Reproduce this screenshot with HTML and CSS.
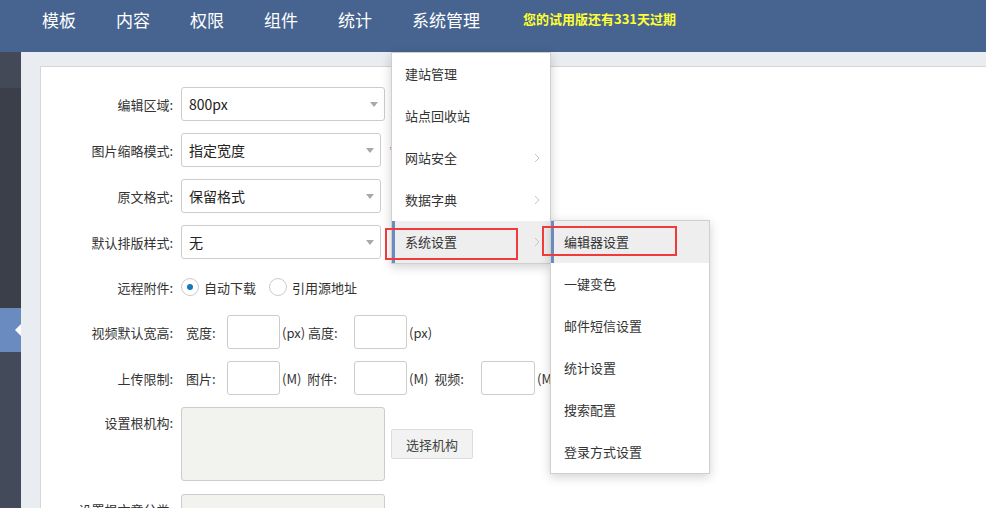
FILE: index.html
```html
<!DOCTYPE html>
<html lang="zh-CN">
<head>
    <meta charset="UTF-8">
    <meta name="viewport" content="width=device-width, initial-scale=1.0">
    <title>编辑器设置</title>
    <link rel="stylesheet" href="styles.css">
</head>
<body>
    <header class="top-bar">
        <nav class="top-nav">
            <a class="nav-item">模板</a>
            <a class="nav-item">内容</a>
            <a class="nav-item">权限</a>
            <a class="nav-item">组件</a>
            <a class="nav-item">统计</a>
            <a class="nav-item">系统管理</a>
        </nav>
        <span class="trial-tip">您的试用版还有331天过期</span>
    </header>

    <div class="main">
        <aside class="side-bar">
            <div class="side-top"></div>
            <div class="side-mid"></div>
            <div class="side-active"><span class="side-arrow"></span></div>
            <div class="side-rest"></div>
        </aside>

        <div class="content">
            <div class="panel">
                <div class="form-row">
                    <label class="form-label">编辑区域:</label>
                    <div class="select wide"><span>800px</span><i class="caret"></i></div>
                </div>
                <div class="form-row">
                    <label class="form-label">图片缩略模式:</label>
                    <div class="select"><span>指定宽度</span><i class="caret"></i></div>
                    <span class="req">*</span>
                </div>
                <div class="form-row">
                    <label class="form-label">原文格式:</label>
                    <div class="select"><span>保留格式</span><i class="caret"></i></div>
                </div>
                <div class="form-row">
                    <label class="form-label">默认排版样式:</label>
                    <div class="select"><span>无</span><i class="caret"></i></div>
                </div>
                <div class="form-row radio-row">
                    <label class="form-label">远程附件:</label>
                    <span class="radio checked"></span><span class="radio-text">自动下载</span>
                    <span class="radio"></span><span class="radio-text">引用源地址</span>
                </div>
                <div class="form-row">
                    <label class="form-label">视频默认宽高:</label>
                    <span class="field-text">宽度:</span>
                    <span class="box"></span>
                    <span class="unit">(px) 高度:</span>
                    <span class="box"></span>
                    <span class="unit">(px)</span>
                </div>
                <div class="form-row">
                    <label class="form-label">上传限制:</label>
                    <span class="field-text">图片:</span>
                    <span class="box"></span>
                    <span class="unit">(M)&nbsp; 附件:</span>
                    <span class="box"></span>
                    <span class="unit">(M)&nbsp; 视频:</span>
                    <span class="box box-last"></span>
                    <span class="unit">(M)</span>
                </div>
                <div class="form-row area-row">
                    <label class="form-label">设置根机构:</label>
                    <div class="area"></div>
                    <button class="pick-btn">选择机构</button>
                </div>
                <div class="form-row area-row">
                    <label class="form-label">设置根文章分类:</label>
                    <div class="area"></div>
                </div>
            </div>
        </div>
    </div>

    <ul class="drop-menu">
        <li class="menu-item">建站管理</li>
        <li class="menu-item">站点回收站</li>
        <li class="menu-item has-sub">网站安全<svg class="chev" width="6" height="10" viewBox="0 0 6 10"><polyline points="1,1 5,5 1,9" fill="none" stroke="#c4c4c4" stroke-width="1"/></svg></li>
        <li class="menu-item has-sub">数据字典<svg class="chev" width="6" height="10" viewBox="0 0 6 10"><polyline points="1,1 5,5 1,9" fill="none" stroke="#c4c4c4" stroke-width="1"/></svg></li>
        <li class="menu-item has-sub hover">系统设置<svg class="chev" width="6" height="10" viewBox="0 0 6 10"><polyline points="1,1 5,5 1,9" fill="none" stroke="#c4c4c4" stroke-width="1"/></svg></li>
    </ul>

    <ul class="drop-menu sub-menu">
        <li class="menu-item hover">编辑器设置</li>
        <li class="menu-item">一键变色</li>
        <li class="menu-item">邮件短信设置</li>
        <li class="menu-item">统计设置</li>
        <li class="menu-item">搜索配置</li>
        <li class="menu-item">登录方式设置</li>
    </ul>

    <div class="mark mark-one"></div>
    <div class="mark mark-two"></div>
</body>
</html>
```

FILE: styles.css
```css
:root {
    --nav-blue: #46648f;
    --side-dark: #3a3f4a;
    --side-active: #6a8bbf;
    --page-gray: #e9edf2;
    --line: #cccccc;
    --text: #333333;
}

* {
    box-sizing: border-box;
}

body {
    margin: 0;
    height: 508px;
    overflow: hidden;
    font-family: "Noto Sans CJK SC", "Noto Sans", sans-serif;
    font-size: 13px;
    color: var(--text);
    background: var(--page-gray);
}

/* top navigation */
.top-bar {
    height: 52px;
    background: var(--nav-blue);
    display: flex;
    align-items: flex-start;
}

.top-nav {
    display: flex;
    padding-left: 22px;
}

.nav-item {
    padding: 0 20px;
    line-height: 40px;
    font-size: 17px;
    color: #fff;
}

.trial-tip {
    margin-left: 23px;
    line-height: 38px;
    font-size: 13px;
    font-weight: bold;
    color: #ffff33;
}

/* sidebar + content */
.main {
    display: flex;
    height: 456px;
}

.side-bar {
    width: 21px;
    display: flex;
    flex-direction: column;
}

.side-top {
    height: 36px;
    background: #434956;
}

.side-mid {
    height: 220px;
    background: var(--side-dark);
}

.side-active {
    height: 44px;
    background: var(--side-active);
    display: flex;
    align-items: center;
    justify-content: flex-end;
}

.side-arrow {
    width: 0;
    height: 0;
    border-top: 6px solid transparent;
    border-bottom: 6px solid transparent;
    border-right: 6px solid #fff;
}

.side-rest {
    flex: 1;
    background: #434a59;
}

.content {
    flex: 1;
    padding: 14px 0 0 19px;
}

.panel {
    height: 100%;
    background: #fff;
    border-left: 1px solid #d6d6d6;
    border-top: 1px solid #d6d6d6;
    padding-top: 20px;
}

/* form */
.form-row {
    display: flex;
    align-items: center;
    height: 34px;
    margin-bottom: 12px;
}

.form-label {
    width: 132px;
    margin-right: 8px;
    text-align: right;
    flex-shrink: 0;
    white-space: nowrap;
}

.select {
    width: 200px;
    height: 34px;
    border: 1px solid var(--line);
    border-radius: 3px;
    display: flex;
    align-items: center;
    justify-content: space-between;
    padding: 0 6px 0 7px;
    font-size: 14px;
    color: #222;
}

.select.wide {
    width: 204px;
}

.caret {
    width: 0;
    height: 0;
    border-left: 4px solid transparent;
    border-right: 4px solid transparent;
    border-top: 5px solid #a9a9a9;
}

.req {
    margin-left: 8px;
    color: #d9534f;
    font-size: 12px;
}

.radio-row {
    height: 32px;
}

.radio {
    width: 18px;
    height: 18px;
    border: 1px solid #ccc;
    border-radius: 50%;
    display: flex;
    align-items: center;
    justify-content: center;
}

.radio.checked::after {
    content: '';
    width: 6px;
    height: 6px;
    border-radius: 50%;
    background: #1479b8;
}

.radio-text {
    margin: 0 13px 0 5px;
}

.field-text {
    margin-left: 5px;
    width: 41px;
}

.box {
    width: 53px;
    height: 34px;
    border: 1px solid var(--line);
    border-radius: 3px;
    flex-shrink: 0;
}

.unit {
    width: 74px;
    padding-left: 2px;
    font-size: 13px;
    white-space: nowrap;
    flex-shrink: 0;
}

.box-last {
    width: 54px;
}

.area-row {
    height: 74px;
    align-items: flex-start;
    margin-bottom: 13px;
}

.area-row .form-label {
    padding-top: 6px;
}

.area {
    width: 204px;
    height: 74px;
    background: #f2f2ef;
    border: 1px solid var(--line);
    border-radius: 3px;
}

.pick-btn {
    align-self: center;
    margin-left: 6px;
    width: 82px;
    height: 30px;
    background: #f2f2f2;
    border: 1px solid #dcdcdc;
    border-radius: 2px;
    font-family: inherit;
    font-size: 13px;
    color: #444;
    padding: 0;
}

/* dropdown menus */
.drop-menu {
    position: absolute;
    left: 391px;
    top: 52px;
    width: 160px;
    margin: 0;
    padding: 0;
    list-style: none;
    background: #fff;
    border: 1px solid #cfcfcf;
    box-shadow: 0 3px 10px rgba(0,0,0,0.18);
}

.sub-menu {
    left: 550px;
    top: 220px;
}

.menu-item {
    height: 42px;
    line-height: 42px;
    padding-left: 13px;
    color: #333;
    display: flex;
    align-items: center;
    justify-content: space-between;
    padding-right: 10px;
}

.menu-item.hover {
    background: #eeeeee;
    border-left: 3px solid var(--side-active);
    padding-left: 10px;
}

/* annotation boxes */
.mark {
    position: absolute;
    border: 2px solid #ee3b3b;
}

.mark-one {
    left: 385px;
    top: 228px;
    width: 133px;
    height: 32px;
}

.mark-two {
    left: 542px;
    top: 226px;
    width: 135px;
    height: 30px;
}
```
